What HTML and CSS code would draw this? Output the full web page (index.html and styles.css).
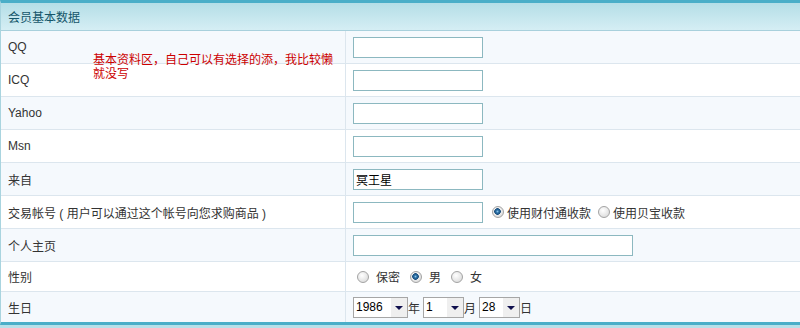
FILE: index.html
```html
<!DOCTYPE html>
<html>
<head>
  <meta charset="utf-8">
  <title>会员基本数据</title>
  <link rel="stylesheet" href="styles.css">
</head>
<body>
  <div class="panel">
    <div class="panel-head">会员基本数据</div>
    <p class="note">基本资料区，自己可以有选择的添，我比较懒<br>就没写</p>

    <div class="row alt">
      <div class="label">QQ</div>
      <div class="field"><input type="text" class="text"></div>
    </div>
    <div class="row">
      <div class="label">ICQ</div>
      <div class="field"><input type="text" class="text"></div>
    </div>
    <div class="row alt">
      <div class="label">Yahoo</div>
      <div class="field"><input type="text" class="text"></div>
    </div>
    <div class="row">
      <div class="label">Msn</div>
      <div class="field"><input type="text" class="text"></div>
    </div>
    <div class="row alt">
      <div class="label">来自</div>
      <div class="field"><input type="text" class="text" value="冥王星"></div>
    </div>
    <div class="row">
      <div class="label">交易帐号 ( 用户可以通过这个帐号向您求购商品 )</div>
      <div class="field">
        <input type="text" class="text">
        <label class="opt pay"><input type="radio" name="pay" checked>使用财付通收款</label>
        <label class="opt pay"><input type="radio" name="pay">使用贝宝收款</label>
      </div>
    </div>
    <div class="row alt">
      <div class="label">个人主页</div>
      <div class="field"><input type="text" class="text wide"></div>
    </div>
    <div class="row short">
      <div class="label">性别</div>
      <div class="field gender">
        <label class="opt"><input type="radio" name="sex">保密</label>
        <label class="opt"><input type="radio" name="sex" checked>男</label>
        <label class="opt"><input type="radio" name="sex">女</label>
      </div>
    </div>
    <div class="row alt last">
      <div class="label">生日</div>
      <div class="field">
        <span class="select year"><select><option>1986</option></select></span>年
        <span class="select month"><select><option>1</option></select></span>月
        <span class="select day"><select><option>28</option></select></span>日
      </div>
    </div>
  </div>
  <div class="panel-next"></div>
</body>
</html>
```

FILE: styles.css
```css
:root {
  --teal: #4aaec8;
  --line: #dce6ee;
  --row-alt: #f5f9fd;
  --input-border: #8cb8c0;
  --text: #333;
}

* {
  margin: 0;
  padding: 0;
  box-sizing: border-box;
}

body {
  font: 12px "Liberation Sans", "Noto Sans CJK SC", sans-serif;
  color: var(--text);
  background: #fff;
  width: 800px;
}

.panel {
  position: relative;
  border-top: 3px solid var(--teal);
  border-bottom: 3px solid var(--teal);
  border-left: 1px solid #a9d4df;
}

.panel-head {
  height: 28px;
  padding-left: 7px;
  display: flex;
  align-items: center;
  color: #15566a;
  background: linear-gradient(#b4dee7, #d5eef4);
  border-bottom: 1px solid #a8d0dc;
}

.note {
  position: absolute;
  left: 92px;
  top: 50px;
  color: #cc0000;
  line-height: 14px;
}

.row {
  display: grid;
  grid-template-columns: 345px 1fr;
  height: 33px;
  border-bottom: 1px solid var(--line);
}

.row.alt {
  background: var(--row-alt);
}

.row.short {
  height: 30px;
}

.row.last {
  height: 30px;
  border-bottom: none;
}

.label {
  display: flex;
  align-items: center;
  padding-left: 7px;
  border-right: 1px solid var(--line);
}

.field {
  display: flex;
  align-items: center;
  padding-left: 7px;
}

input.text {
  width: 130px;
  height: 21px;
  border: 1px solid var(--input-border);
  background: #fff;
  padding: 0 2px;
  font: inherit;
  color: #000;
  outline: none;
}

input.text.wide {
  width: 280px;
}

.opt {
  display: flex;
  align-items: center;
}

.opt input {
  appearance: none;
  width: 12px;
  height: 12px;
  border-radius: 50%;
  border: 1px solid #a3a3a3;
  background: radial-gradient(circle at 40% 35%, #fff, #d4d4d4);
  margin-right: 3px;
}

.opt input:checked {
  background:
    radial-gradient(circle at 45% 45%, #8cc3ea 0, #2a6ea3 1.5px, #1b4f7e 3px, transparent 3.6px),
    radial-gradient(circle at 40% 35%, #fff, #d4d4d4);
}

.pay {
  margin-left: 9px;
}

.pay + .pay {
  margin-left: 7px;
}

.gender {
  padding-left: 11px;
}

.gender .opt input {
  margin-right: 7px;
}

.gender .opt + .opt {
  margin-left: 10px;
}

.select {
  position: relative;
  display: inline-block;
  margin-left: 3px;
}

.select.year {
  margin-left: 0;
}

.select select {
  appearance: none;
  height: 21px;
  border: 1px solid #a6a6a6;
  padding: 0 0 0 2px;
  font: inherit;
  color: #000;
  background: linear-gradient(to left, #efefef 16px, #fff 16px);
  outline: none;
}

.select::after {
  content: "";
  position: absolute;
  right: 5px;
  top: 9px;
  border-left: 4px solid transparent;
  border-right: 4px solid transparent;
  border-top: 4px solid #10104e;
  pointer-events: none;
}

.year select { width: 55px; }
.month select { width: 41px; }
.day select { width: 41px; }

.panel-next {
  height: 6px;
  background: #b7e0e9;
}
```
